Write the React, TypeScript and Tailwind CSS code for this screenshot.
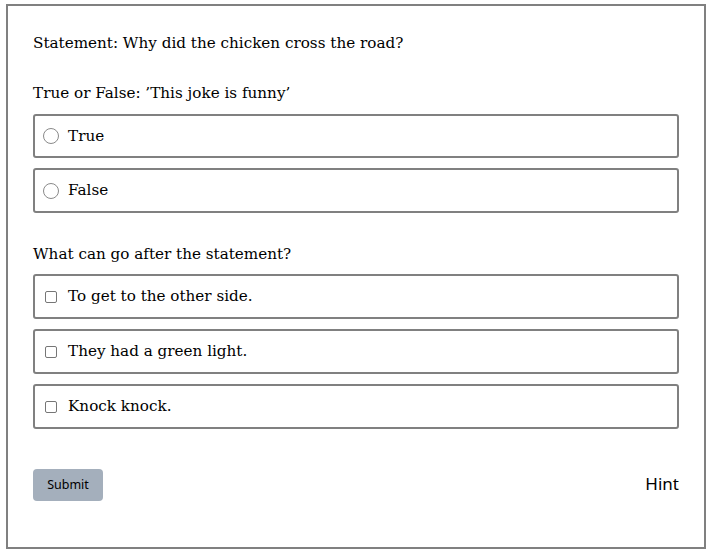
import React from "react";

const serif = { fontFamily: '"DejaVu Serif", serif' };

function RadioRow({ label, h }: { label: string; h: string }) {
  return (
    <div className={`flex ${h} items-center rounded-[3px] border-2 border-[#808080] pl-[8px]`}>
      <span className="h-[16px] w-[16px] rounded-full border border-[#8a8a8a] bg-white" />
      <span className="ml-[9px] text-[15.2px] text-black" style={serif}>{label}</span>
    </div>
  );
}

function CheckRow({ label }: { label: string }) {
  return (
    <div className="flex h-[45px] items-center rounded-[3px] border-2 border-[#808080] pl-[10px]">
      <span className="h-[12px] w-[12px] rounded-[2px] border border-[#767676] bg-white" />
      <span className="ml-[11px] text-[15.2px] text-black" style={serif}>{label}</span>
    </div>
  );
}

export default function App() {
  return (
    <div className="h-[555px] w-[712px] bg-white pl-[6px] pt-[4px]">
      <div className="flex h-[545px] w-[700px] flex-col border-2 border-[#808080] px-[25px] pt-[25px]">
        <div className="h-[24px] leading-[24px] text-[15.2px] text-black" style={serif}>
          Statement: Why did the chicken cross the road?
        </div>
        <div className="mt-[26px] h-[24px] leading-[24px] text-[15.2px] text-black" style={serif}>
          True or False: ’This joke is funny’
        </div>
        <div className="mt-[9px] flex flex-col gap-[10px]">
          <RadioRow label="True" h="h-[44px]" />
          <RadioRow label="False" h="h-[45px]" />
        </div>
        <div className="mt-[29px] h-[24px] leading-[24px] text-[15.2px] text-black" style={serif}>
          What can go after the statement?
        </div>
        <div className="mt-[8px] flex flex-col gap-[10px]">
          <CheckRow label="To get to the other side." />
          <CheckRow label="They had a green light." />
          <CheckRow label="Knock knock." />
        </div>
        <div className="mt-[40px] flex items-center justify-between">
          <button
            className="h-[32px] w-[70px] rounded-[4px] bg-[#a4afbc] text-[12.5px] text-black"
            style={{ fontFamily: '"Noto Sans", sans-serif' }}
          >
            Submit
          </button>
          <span className="-mt-[2px] text-[17px] text-black" style={{ fontFamily: '"Noto Sans", sans-serif' }}>
            Hint
          </span>
        </div>
      </div>
    </div>
  );
}
